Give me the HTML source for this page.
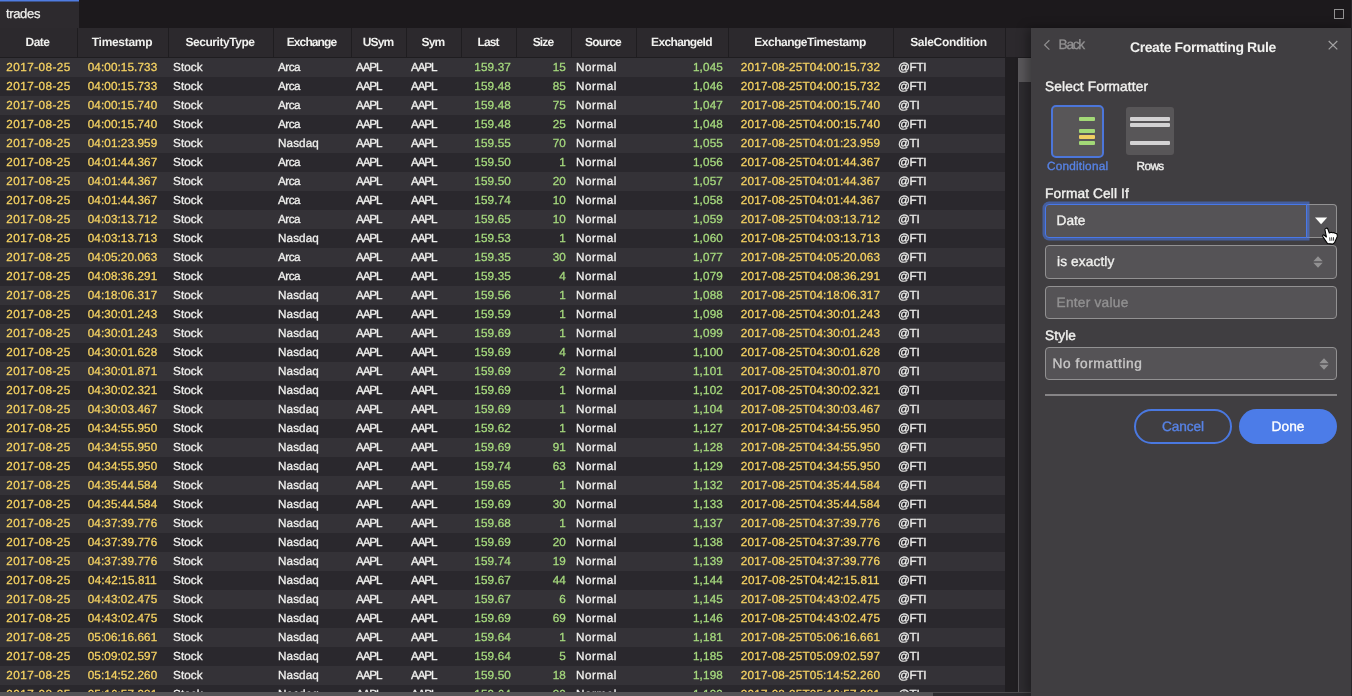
<!DOCTYPE html>
<html lang="en">
<head>
<meta charset="utf-8">
<title>trades</title>
<style>
*{box-sizing:border-box;margin:0;padding:0}
html,body{width:1352px;height:696px;overflow:hidden;background:#1a171a}
body{position:relative;font-family:"Liberation Sans",sans-serif;color:#f0f0ee;font-size:12px;text-rendering:geometricPrecision}
.tabbar,.grid,.panel{will-change:transform}
.tabbar{position:absolute;left:0;top:0;width:1352px;height:28px;background:#1c191c}
.tab{position:absolute;left:0;top:0;width:79px;height:28px;background:linear-gradient(#4f7ce2 0,#4f7ce2 1px,#3d5288 1px,#3d5288 2px,#2d2a2e 2px,#2d2a2e 100%)}
.tab span{position:absolute;left:6px;top:5px;font-size:13px;line-height:18px;color:#f0f0ee;letter-spacing:-0.35px;-webkit-text-stroke:.25px #f0f0ee}
.maxi{position:absolute;left:1334px;top:9px;width:10px;height:10px;border:1px solid #929192}
.grid{position:absolute;left:0;top:28px;width:1031px;height:668px;overflow:hidden;background:#1a171a}
.hdr{position:absolute;left:0;top:0;width:1031px;height:30px;background:#2c292d;border-bottom:1px solid #1f1d20}
.hc{position:absolute;top:0;height:29px;border-left:1px solid #1f1d20;text-align:center;font-weight:bold;font-size:12px;line-height:28px;white-space:nowrap;padding-right:2px}
.hc.h0{border-left:none;padding-right:2px}
.rows{position:absolute;left:0;top:30px;width:1005px}
.r{position:relative;height:19px;width:1005px}
.r.a{background:#343237}
.r.b{background:#2a282d}
.c{position:absolute;top:0;height:19px;line-height:19px;white-space:nowrap;padding:0 5px;font-size:11.7px;-webkit-text-stroke:.3px currentColor}
.c.d{text-align:center;color:#f5d262;padding:0 5px 0 5px}
.c.s{text-align:left;color:#f0f0ee}
.c.n{text-align:right;color:#a5d97d;padding-right:5px}
.gutter{position:absolute;left:1005px;top:30px;width:13px;height:638px;background:#201e21}
.vtrack{position:absolute;left:1018px;top:30px;width:13px;height:638px;background:#2e2c30;border-left:1px solid #555356}
.vthumb{position:absolute;left:-1px;top:0;width:13px;height:24px;background:#5a585b}
.htrack{position:absolute;left:0;top:664px;width:1031px;height:4px;background:#2d2b2f;border-top:1px solid #4d4b4e}
.hthumb{position:absolute;left:0;top:-1px;width:933px;height:4px;background:#555356}
.panel{position:absolute;left:1031px;top:28px;width:321px;height:668px;background:#403e41;box-shadow:-4px 0 10px rgba(0,0,0,.35)}
.panel *{position:absolute}
.back{font-size:13.7px;line-height:20px;color:#929192;letter-spacing:-1.25px;-webkit-text-stroke:.3px currentColor}
.title{font-size:14px;line-height:20px;font-weight:bold;color:#f0f0ee;white-space:nowrap;letter-spacing:-0.41px}
.lbl{font-size:13.7px;line-height:20px;color:#f0f0ee;white-space:nowrap;-webkit-text-stroke:.4px currentColor;letter-spacing:.12px}
.fbox{background:#585658;border-radius:3px}
.fbox.sel{border:2.5px solid #4c76da;border-radius:5px}
.bar{width:16px;height:4px;border-radius:1px}
.bar.g{background:#a3d977}
.bar.y{background:#f0cf62}
.bar.w{width:40px;background:#d3d2d3}
.flbl{font-size:11.8px;line-height:18px;color:#f0f0ee;white-space:nowrap;-webkit-text-stroke:.35px currentColor}
.flbl.blue{color:#5783e6;letter-spacing:.2px}
.inp{background:#555356;border:1px solid #929192;border-radius:4px}
.inp.focus{border-color:#4878ea;box-shadow:0 0 0 2.5px rgba(72,120,234,.55);border-radius:4px 0 0 4px;z-index:2}
.ddbtn{background:#555356;border:1px solid #929192;border-radius:0 4px 4px 0;border-left:none}
.txt{top:0;bottom:0;font-size:13.7px;line-height:32px;color:#f0f0ee;white-space:nowrap;-webkit-text-stroke:.35px currentColor;letter-spacing:.12px}
.txt.ph{color:#929192}
.txt.dim{color:#c8c7c7;letter-spacing:.6px;line-height:31px}
.hr{background:#868486}
.btn{border-radius:18px;text-align:center}
.btn span{left:0;right:0;top:0;font-size:13.7px;line-height:35px;-webkit-text-stroke:.35px currentColor}
.btn.out{border:2px solid #4a78e0;color:#5783e6}
.btn.out span{line-height:31px;letter-spacing:-.1px}
.btn.pri{background:#4c7ce8;color:#fff}
.btn.pri span{letter-spacing:.1px}
.edge{position:absolute;left:1351px;top:0;width:1px;height:696px;background:#29272b}
.tri,.sort,.hand{z-index:3}
.h0{left:0px;width:77px;letter-spacing:-0.48px}
.k0{left:0px;width:77px;letter-spacing:0.45px}
.h1{left:77px;width:91px;letter-spacing:-0.3px}
.k1{left:77px;width:91px;letter-spacing:0.12px}
.h2{left:168px;width:105px;letter-spacing:-0.44px}
.k2{left:168px;width:105px;letter-spacing:0.1px}
.h3{left:273px;width:78px;letter-spacing:-0.89px}
.k3{left:273px;width:78px;letter-spacing:0.1px}
.h4{left:351px;width:55px;letter-spacing:-0.85px}
.k4{left:351px;width:55px;letter-spacing:-1.12px}
.h5{left:406px;width:55px;letter-spacing:-0.84px}
.k5{left:406px;width:55px;letter-spacing:-1.12px}
.h6{left:461px;width:55px;letter-spacing:-0.89px}
.k6{left:461px;width:55px;letter-spacing:0.16px}
.h7{left:516px;width:55px;letter-spacing:-0.88px}
.k7{left:516px;width:55px;letter-spacing:0.16px}
.h8{left:571px;width:65px;letter-spacing:-0.8px}
.k8{left:571px;width:65px;letter-spacing:0.56px}
.h9{left:636px;width:92px;letter-spacing:-0.65px}
.k9{left:636px;width:92px;letter-spacing:0.16px}
.h10{left:728px;width:165px;letter-spacing:-0.49px}
.k10{left:728px;width:165px;letter-spacing:0.18px}
.h11{left:893px;width:112px;letter-spacing:-0.31px}
.k11{left:893px;width:112px;letter-spacing:-0.3px}
.arca{letter-spacing:-0.5px}
</style>
</head>
<body>
<div class="tabbar"><div class="tab"><span>trades</span></div><div class="maxi"></div></div>
<div class="grid">
<div class="hdr">
<div class="hc h0"><span>Date</span></div><div class="hc h1"><span>Timestamp</span></div><div class="hc h2"><span>SecurityType</span></div><div class="hc h3"><span>Exchange</span></div><div class="hc h4"><span>USym</span></div><div class="hc h5"><span>Sym</span></div><div class="hc h6"><span>Last</span></div><div class="hc h7"><span>Size</span></div><div class="hc h8"><span>Source</span></div><div class="hc h9"><span>ExchangeId</span></div><div class="hc h10"><span>ExchangeTimestamp</span></div><div class="hc h11"><span>SaleCondition</span></div><div class="hc" style="left:1005px;width:26px"></div>
</div>
<div class="rows">
<div class="r a"><span class="c d k0">2017-08-25</span><span class="c d k1">04:00:15.733</span><span class="c s k2">Stock</span><span class="c s k3 arca">Arca</span><span class="c s k4">AAPL</span><span class="c s k5">AAPL</span><span class="c n k6">159.37</span><span class="c n k7">15</span><span class="c s k8">Normal</span><span class="c n k9">1,045</span><span class="c d k10">2017-08-25T04:00:15.732</span><span class="c s k11">@FTI</span></div>
<div class="r b"><span class="c d k0">2017-08-25</span><span class="c d k1">04:00:15.733</span><span class="c s k2">Stock</span><span class="c s k3 arca">Arca</span><span class="c s k4">AAPL</span><span class="c s k5">AAPL</span><span class="c n k6">159.48</span><span class="c n k7">85</span><span class="c s k8">Normal</span><span class="c n k9">1,046</span><span class="c d k10">2017-08-25T04:00:15.732</span><span class="c s k11">@FTI</span></div>
<div class="r a"><span class="c d k0">2017-08-25</span><span class="c d k1">04:00:15.740</span><span class="c s k2">Stock</span><span class="c s k3 arca">Arca</span><span class="c s k4">AAPL</span><span class="c s k5">AAPL</span><span class="c n k6">159.48</span><span class="c n k7">75</span><span class="c s k8">Normal</span><span class="c n k9">1,047</span><span class="c d k10">2017-08-25T04:00:15.740</span><span class="c s k11">@TI</span></div>
<div class="r b"><span class="c d k0">2017-08-25</span><span class="c d k1">04:00:15.740</span><span class="c s k2">Stock</span><span class="c s k3 arca">Arca</span><span class="c s k4">AAPL</span><span class="c s k5">AAPL</span><span class="c n k6">159.48</span><span class="c n k7">25</span><span class="c s k8">Normal</span><span class="c n k9">1,048</span><span class="c d k10">2017-08-25T04:00:15.740</span><span class="c s k11">@FTI</span></div>
<div class="r a"><span class="c d k0">2017-08-25</span><span class="c d k1">04:01:23.959</span><span class="c s k2">Stock</span><span class="c s k3">Nasdaq</span><span class="c s k4">AAPL</span><span class="c s k5">AAPL</span><span class="c n k6">159.55</span><span class="c n k7">70</span><span class="c s k8">Normal</span><span class="c n k9">1,055</span><span class="c d k10">2017-08-25T04:01:23.959</span><span class="c s k11">@TI</span></div>
<div class="r b"><span class="c d k0">2017-08-25</span><span class="c d k1">04:01:44.367</span><span class="c s k2">Stock</span><span class="c s k3 arca">Arca</span><span class="c s k4">AAPL</span><span class="c s k5">AAPL</span><span class="c n k6">159.50</span><span class="c n k7">1</span><span class="c s k8">Normal</span><span class="c n k9">1,056</span><span class="c d k10">2017-08-25T04:01:44.367</span><span class="c s k11">@FTI</span></div>
<div class="r a"><span class="c d k0">2017-08-25</span><span class="c d k1">04:01:44.367</span><span class="c s k2">Stock</span><span class="c s k3 arca">Arca</span><span class="c s k4">AAPL</span><span class="c s k5">AAPL</span><span class="c n k6">159.50</span><span class="c n k7">20</span><span class="c s k8">Normal</span><span class="c n k9">1,057</span><span class="c d k10">2017-08-25T04:01:44.367</span><span class="c s k11">@FTI</span></div>
<div class="r b"><span class="c d k0">2017-08-25</span><span class="c d k1">04:01:44.367</span><span class="c s k2">Stock</span><span class="c s k3 arca">Arca</span><span class="c s k4">AAPL</span><span class="c s k5">AAPL</span><span class="c n k6">159.74</span><span class="c n k7">10</span><span class="c s k8">Normal</span><span class="c n k9">1,058</span><span class="c d k10">2017-08-25T04:01:44.367</span><span class="c s k11">@FTI</span></div>
<div class="r a"><span class="c d k0">2017-08-25</span><span class="c d k1">04:03:13.712</span><span class="c s k2">Stock</span><span class="c s k3 arca">Arca</span><span class="c s k4">AAPL</span><span class="c s k5">AAPL</span><span class="c n k6">159.65</span><span class="c n k7">10</span><span class="c s k8">Normal</span><span class="c n k9">1,059</span><span class="c d k10">2017-08-25T04:03:13.712</span><span class="c s k11">@TI</span></div>
<div class="r b"><span class="c d k0">2017-08-25</span><span class="c d k1">04:03:13.713</span><span class="c s k2">Stock</span><span class="c s k3">Nasdaq</span><span class="c s k4">AAPL</span><span class="c s k5">AAPL</span><span class="c n k6">159.53</span><span class="c n k7">1</span><span class="c s k8">Normal</span><span class="c n k9">1,060</span><span class="c d k10">2017-08-25T04:03:13.713</span><span class="c s k11">@FTI</span></div>
<div class="r a"><span class="c d k0">2017-08-25</span><span class="c d k1">04:05:20.063</span><span class="c s k2">Stock</span><span class="c s k3 arca">Arca</span><span class="c s k4">AAPL</span><span class="c s k5">AAPL</span><span class="c n k6">159.35</span><span class="c n k7">30</span><span class="c s k8">Normal</span><span class="c n k9">1,077</span><span class="c d k10">2017-08-25T04:05:20.063</span><span class="c s k11">@FTI</span></div>
<div class="r b"><span class="c d k0">2017-08-25</span><span class="c d k1">04:08:36.291</span><span class="c s k2">Stock</span><span class="c s k3 arca">Arca</span><span class="c s k4">AAPL</span><span class="c s k5">AAPL</span><span class="c n k6">159.35</span><span class="c n k7">4</span><span class="c s k8">Normal</span><span class="c n k9">1,079</span><span class="c d k10">2017-08-25T04:08:36.291</span><span class="c s k11">@FTI</span></div>
<div class="r a"><span class="c d k0">2017-08-25</span><span class="c d k1">04:18:06.317</span><span class="c s k2">Stock</span><span class="c s k3">Nasdaq</span><span class="c s k4">AAPL</span><span class="c s k5">AAPL</span><span class="c n k6">159.56</span><span class="c n k7">1</span><span class="c s k8">Normal</span><span class="c n k9">1,088</span><span class="c d k10">2017-08-25T04:18:06.317</span><span class="c s k11">@TI</span></div>
<div class="r b"><span class="c d k0">2017-08-25</span><span class="c d k1">04:30:01.243</span><span class="c s k2">Stock</span><span class="c s k3">Nasdaq</span><span class="c s k4">AAPL</span><span class="c s k5">AAPL</span><span class="c n k6">159.59</span><span class="c n k7">1</span><span class="c s k8">Normal</span><span class="c n k9">1,098</span><span class="c d k10">2017-08-25T04:30:01.243</span><span class="c s k11">@TI</span></div>
<div class="r a"><span class="c d k0">2017-08-25</span><span class="c d k1">04:30:01.243</span><span class="c s k2">Stock</span><span class="c s k3">Nasdaq</span><span class="c s k4">AAPL</span><span class="c s k5">AAPL</span><span class="c n k6">159.69</span><span class="c n k7">1</span><span class="c s k8">Normal</span><span class="c n k9">1,099</span><span class="c d k10">2017-08-25T04:30:01.243</span><span class="c s k11">@TI</span></div>
<div class="r b"><span class="c d k0">2017-08-25</span><span class="c d k1">04:30:01.628</span><span class="c s k2">Stock</span><span class="c s k3">Nasdaq</span><span class="c s k4">AAPL</span><span class="c s k5">AAPL</span><span class="c n k6">159.69</span><span class="c n k7">4</span><span class="c s k8">Normal</span><span class="c n k9">1,100</span><span class="c d k10">2017-08-25T04:30:01.628</span><span class="c s k11">@TI</span></div>
<div class="r a"><span class="c d k0">2017-08-25</span><span class="c d k1">04:30:01.871</span><span class="c s k2">Stock</span><span class="c s k3">Nasdaq</span><span class="c s k4">AAPL</span><span class="c s k5">AAPL</span><span class="c n k6">159.69</span><span class="c n k7">2</span><span class="c s k8">Normal</span><span class="c n k9">1,101</span><span class="c d k10">2017-08-25T04:30:01.870</span><span class="c s k11">@TI</span></div>
<div class="r b"><span class="c d k0">2017-08-25</span><span class="c d k1">04:30:02.321</span><span class="c s k2">Stock</span><span class="c s k3">Nasdaq</span><span class="c s k4">AAPL</span><span class="c s k5">AAPL</span><span class="c n k6">159.69</span><span class="c n k7">1</span><span class="c s k8">Normal</span><span class="c n k9">1,102</span><span class="c d k10">2017-08-25T04:30:02.321</span><span class="c s k11">@TI</span></div>
<div class="r a"><span class="c d k0">2017-08-25</span><span class="c d k1">04:30:03.467</span><span class="c s k2">Stock</span><span class="c s k3">Nasdaq</span><span class="c s k4">AAPL</span><span class="c s k5">AAPL</span><span class="c n k6">159.69</span><span class="c n k7">1</span><span class="c s k8">Normal</span><span class="c n k9">1,104</span><span class="c d k10">2017-08-25T04:30:03.467</span><span class="c s k11">@TI</span></div>
<div class="r b"><span class="c d k0">2017-08-25</span><span class="c d k1">04:34:55.950</span><span class="c s k2">Stock</span><span class="c s k3">Nasdaq</span><span class="c s k4">AAPL</span><span class="c s k5">AAPL</span><span class="c n k6">159.62</span><span class="c n k7">1</span><span class="c s k8">Normal</span><span class="c n k9">1,127</span><span class="c d k10">2017-08-25T04:34:55.950</span><span class="c s k11">@FTI</span></div>
<div class="r a"><span class="c d k0">2017-08-25</span><span class="c d k1">04:34:55.950</span><span class="c s k2">Stock</span><span class="c s k3">Nasdaq</span><span class="c s k4">AAPL</span><span class="c s k5">AAPL</span><span class="c n k6">159.69</span><span class="c n k7">91</span><span class="c s k8">Normal</span><span class="c n k9">1,128</span><span class="c d k10">2017-08-25T04:34:55.950</span><span class="c s k11">@FTI</span></div>
<div class="r b"><span class="c d k0">2017-08-25</span><span class="c d k1">04:34:55.950</span><span class="c s k2">Stock</span><span class="c s k3">Nasdaq</span><span class="c s k4">AAPL</span><span class="c s k5">AAPL</span><span class="c n k6">159.74</span><span class="c n k7">63</span><span class="c s k8">Normal</span><span class="c n k9">1,129</span><span class="c d k10">2017-08-25T04:34:55.950</span><span class="c s k11">@FTI</span></div>
<div class="r a"><span class="c d k0">2017-08-25</span><span class="c d k1">04:35:44.584</span><span class="c s k2">Stock</span><span class="c s k3">Nasdaq</span><span class="c s k4">AAPL</span><span class="c s k5">AAPL</span><span class="c n k6">159.65</span><span class="c n k7">1</span><span class="c s k8">Normal</span><span class="c n k9">1,132</span><span class="c d k10">2017-08-25T04:35:44.584</span><span class="c s k11">@FTI</span></div>
<div class="r b"><span class="c d k0">2017-08-25</span><span class="c d k1">04:35:44.584</span><span class="c s k2">Stock</span><span class="c s k3">Nasdaq</span><span class="c s k4">AAPL</span><span class="c s k5">AAPL</span><span class="c n k6">159.69</span><span class="c n k7">30</span><span class="c s k8">Normal</span><span class="c n k9">1,133</span><span class="c d k10">2017-08-25T04:35:44.584</span><span class="c s k11">@FTI</span></div>
<div class="r a"><span class="c d k0">2017-08-25</span><span class="c d k1">04:37:39.776</span><span class="c s k2">Stock</span><span class="c s k3">Nasdaq</span><span class="c s k4">AAPL</span><span class="c s k5">AAPL</span><span class="c n k6">159.68</span><span class="c n k7">1</span><span class="c s k8">Normal</span><span class="c n k9">1,137</span><span class="c d k10">2017-08-25T04:37:39.776</span><span class="c s k11">@FTI</span></div>
<div class="r b"><span class="c d k0">2017-08-25</span><span class="c d k1">04:37:39.776</span><span class="c s k2">Stock</span><span class="c s k3">Nasdaq</span><span class="c s k4">AAPL</span><span class="c s k5">AAPL</span><span class="c n k6">159.69</span><span class="c n k7">20</span><span class="c s k8">Normal</span><span class="c n k9">1,138</span><span class="c d k10">2017-08-25T04:37:39.776</span><span class="c s k11">@FTI</span></div>
<div class="r a"><span class="c d k0">2017-08-25</span><span class="c d k1">04:37:39.776</span><span class="c s k2">Stock</span><span class="c s k3">Nasdaq</span><span class="c s k4">AAPL</span><span class="c s k5">AAPL</span><span class="c n k6">159.74</span><span class="c n k7">19</span><span class="c s k8">Normal</span><span class="c n k9">1,139</span><span class="c d k10">2017-08-25T04:37:39.776</span><span class="c s k11">@FTI</span></div>
<div class="r b"><span class="c d k0">2017-08-25</span><span class="c d k1">04:42:15.811</span><span class="c s k2">Stock</span><span class="c s k3">Nasdaq</span><span class="c s k4">AAPL</span><span class="c s k5">AAPL</span><span class="c n k6">159.67</span><span class="c n k7">44</span><span class="c s k8">Normal</span><span class="c n k9">1,144</span><span class="c d k10">2017-08-25T04:42:15.811</span><span class="c s k11">@FTI</span></div>
<div class="r a"><span class="c d k0">2017-08-25</span><span class="c d k1">04:43:02.475</span><span class="c s k2">Stock</span><span class="c s k3">Nasdaq</span><span class="c s k4">AAPL</span><span class="c s k5">AAPL</span><span class="c n k6">159.67</span><span class="c n k7">6</span><span class="c s k8">Normal</span><span class="c n k9">1,145</span><span class="c d k10">2017-08-25T04:43:02.475</span><span class="c s k11">@FTI</span></div>
<div class="r b"><span class="c d k0">2017-08-25</span><span class="c d k1">04:43:02.475</span><span class="c s k2">Stock</span><span class="c s k3">Nasdaq</span><span class="c s k4">AAPL</span><span class="c s k5">AAPL</span><span class="c n k6">159.69</span><span class="c n k7">69</span><span class="c s k8">Normal</span><span class="c n k9">1,146</span><span class="c d k10">2017-08-25T04:43:02.475</span><span class="c s k11">@FTI</span></div>
<div class="r a"><span class="c d k0">2017-08-25</span><span class="c d k1">05:06:16.661</span><span class="c s k2">Stock</span><span class="c s k3">Nasdaq</span><span class="c s k4">AAPL</span><span class="c s k5">AAPL</span><span class="c n k6">159.64</span><span class="c n k7">1</span><span class="c s k8">Normal</span><span class="c n k9">1,181</span><span class="c d k10">2017-08-25T05:06:16.661</span><span class="c s k11">@TI</span></div>
<div class="r b"><span class="c d k0">2017-08-25</span><span class="c d k1">05:09:02.597</span><span class="c s k2">Stock</span><span class="c s k3">Nasdaq</span><span class="c s k4">AAPL</span><span class="c s k5">AAPL</span><span class="c n k6">159.64</span><span class="c n k7">5</span><span class="c s k8">Normal</span><span class="c n k9">1,185</span><span class="c d k10">2017-08-25T05:09:02.597</span><span class="c s k11">@TI</span></div>
<div class="r a"><span class="c d k0">2017-08-25</span><span class="c d k1">05:14:52.260</span><span class="c s k2">Stock</span><span class="c s k3">Nasdaq</span><span class="c s k4">AAPL</span><span class="c s k5">AAPL</span><span class="c n k6">159.50</span><span class="c n k7">18</span><span class="c s k8">Normal</span><span class="c n k9">1,198</span><span class="c d k10">2017-08-25T05:14:52.260</span><span class="c s k11">@FTI</span></div>
<div class="r b"><span class="c d k0">2017-08-25</span><span class="c d k1">05:16:57.981</span><span class="c s k2">Stock</span><span class="c s k3">Nasdaq</span><span class="c s k4">AAPL</span><span class="c s k5">AAPL</span><span class="c n k6">159.64</span><span class="c n k7">30</span><span class="c s k8">Normal</span><span class="c n k9">1,199</span><span class="c d k10">2017-08-25T05:16:57.981</span><span class="c s k11">@TI</span></div>
</div>
<div class="gutter"></div><div class="vtrack"><div class="vthumb"></div></div>
<div class="htrack"><div class="hthumb"></div></div>
</div>
<div class="panel">
<svg class="chev" width="8" height="12" viewBox="0 0 8 12" style="left:12px;top:11px"><path d="M6.4 1.2 L1.6 5.9 L6.4 10.6" fill="none" stroke="#929192" stroke-width="1.2"/></svg>
<span class="back" style="left:27.5px;top:7px">Back</span>
<span class="title" style="left:99px;top:9px">Create Formatting Rule</span>
<svg class="close" width="12" height="12" viewBox="0 0 12 12" style="left:295.5px;top:11px"><path d="M1.7 2 L10.3 10.4 M10.3 2 L1.7 10.4" fill="none" stroke="#a3a2a3" stroke-width="1.2"/></svg>
<span class="lbl" style="left:14px;top:49px">Select Formatter</span>
<div class="fbox sel" style="left:20px;top:77px;width:53px;height:53px"></div>
<div class="bar g" style="left:48px;top:89px"></div>
<div class="bar g" style="left:48px;top:101px"></div>
<div class="bar y" style="left:48px;top:107px"></div>
<div class="bar g" style="left:48px;top:113px"></div>
<div class="fbox" style="left:95px;top:79px;width:48px;height:48px"></div>
<div class="bar w" style="left:99px;top:89px"></div>
<div class="bar w" style="left:99px;top:95px"></div>
<div class="bar w" style="left:99px;top:113px"></div>
<span class="flbl blue" style="left:16px;top:129px">Conditional</span>
<span class="flbl" style="left:105.5px;top:129px;letter-spacing:-.6px">Rows</span>
<span class="lbl" style="left:14px;top:156px">Format Cell If</span>
<div class="inp focus" style="left:14px;top:176px;width:262px;height:34px"><span class="txt" style="left:10.5px;letter-spacing:0">Date</span></div>
<div class="ddbtn" style="left:275px;top:176px;width:31px;height:34px"></div>
<svg class="tri" width="14" height="8" viewBox="0 0 14 8" style="left:283px;top:188.5px"><path d="M1 0.5 L13.2 0.5 L7.1 7.3 Z" fill="#fcfcfa"/></svg>
<div class="inp" style="left:14px;top:217px;width:292px;height:34px"><span class="txt" style="left:11px">is exactly</span></div>
<svg class="sort" width="10" height="12" viewBox="0 0 10 12" style="left:281.5px;top:227.5px"><path d="M0.3 5.2 L5 0.3 L9.7 5.2 Z M0.3 6.8 L9.7 6.8 L5 11.7 Z" fill="#929192"/></svg>
<div class="inp" style="left:14px;top:257.5px;width:292px;height:33.5px"><span class="txt ph" style="left:10.5px;letter-spacing:.25px;top:.5px">Enter value</span></div>
<span class="lbl" style="left:14px;top:298px">Style</span>
<div class="inp" style="left:14px;top:319px;width:292px;height:33px"><span class="txt dim" style="left:6.5px">No formatting</span></div>
<svg class="sort" width="10" height="12" viewBox="0 0 10 12" style="left:288px;top:329.5px"><path d="M0.3 5.2 L5 0.3 L9.7 5.2 Z M0.3 6.8 L9.7 6.8 L5 11.7 Z" fill="#929192"/></svg>
<div class="hr" style="left:14px;top:366px;width:292px;height:2px"></div>
<div class="btn out" style="left:103px;top:381px;width:98px;height:35px"><span>Cancel</span></div>
<div class="btn pri" style="left:208px;top:381px;width:98px;height:35px"><span>Done</span></div>
<svg class="hand" width="20" height="20" viewBox="0 0 20 20" style="left:289px;top:198px"><path d="M4.9 3.5 C5 2.2 7.2 1.6 7.8 2.9 L9.3 7 L11.3 6.3 L12.4 6.8 L13.8 6.6 L15 7.2 L16.4 7.5 C17.4 8.2 17.5 9.4 17.3 10.4 L14.6 16.6 L12.6 18.1 L7.5 17.5 L2.8 10.6 C2.2 9.4 3.2 8.4 4.2 9.2 L6.4 11 Z" fill="#fff" stroke="#000" stroke-width="1.1" stroke-linejoin="round"/><path d="M9.7 11.4 L10 14.9 M11.6 11.3 L11.9 14.8 M13.5 11.2 L13.6 14.7" stroke="#222" stroke-width="0.9" fill="none"/></svg>
</div>
<div class="edge"></div>
</body>
</html>
